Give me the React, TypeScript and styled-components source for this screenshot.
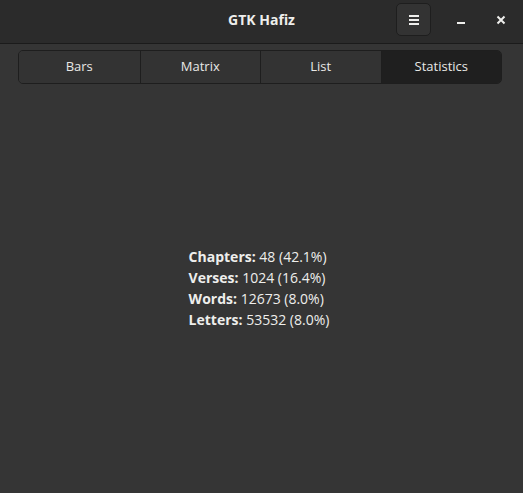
import { createGlobalStyle } from "styled-components";
import styled from "styled-components";

const GlobalStyle = createGlobalStyle`
  html, body {
    margin: 0;
    padding: 0;
    background: #353535;
  }
  body {
    font-family: "Open Sans", "Noto Sans", sans-serif;
    color: #eeeeec;
  }
  * {
    box-sizing: border-box;
  }
`;

const Window = styled.div`
  width: 523px;
  height: 493px;
  display: flex;
  flex-direction: column;
  background: #353535;
  overflow: hidden;
`;

const HeaderBar = styled.header`
  height: 44px;
  flex-shrink: 0;
  display: grid;
  grid-template-columns: 1fr auto 1fr;
  align-items: center;
  background: #2b2b2b;
  border-bottom: 1px solid #1b1b1b;
`;

const Title = styled.div`
  grid-column: 2;
  font-size: 14px;
  font-stretch: 89%;
  font-weight: 700;
  color: #eeeeec;
  margin-bottom: 4px;
`;

const Controls = styled.div`
  grid-column: 3;
  justify-self: end;
  display: flex;
  align-items: center;
  padding-right: 2px;
  margin-bottom: 4px;
`;

const MenuButton = styled.button`
  width: 35px;
  height: 33px;
  margin-right: 10px;
  display: flex;
  align-items: center;
  justify-content: center;
  background: #333333;
  border: 1px solid #1e1e1e;
  border-radius: 5px;
  padding: 0;
  color: #eeeeec;
`;

const WindowButton = styled.button`
  width: 40px;
  height: 33px;
  display: flex;
  align-items: center;
  justify-content: center;
  background: transparent;
  border: none;
  padding: 0;
  color: #eeeeec;
`;

const Content = styled.main`
  flex: 1;
  display: flex;
  flex-direction: column;
  padding: 6px 21px 0 18px;
`;

const TabBar = styled.div`
  display: grid;
  grid-template-columns: repeat(4, 1fr);
  height: 34px;
  border: 1px solid #1e1e1e;
  border-radius: 5px;
  overflow: hidden;
  background: #333333;
`;

const Tab = styled.div<{ $active?: boolean }>`
  display: flex;
  align-items: center;
  justify-content: center;
  font-size: 13px;
  font-stretch: 89%;
  color: #e8e8e6;
  padding-bottom: 2px;
  background: ${(p) => (p.$active ? "#1f1f1f" : "#333333")};
  & + & {
    border-left: 1px solid #1e1e1e;
  }
`;

const StatsArea = styled.div`
  flex: 1;
  display: flex;
  align-items: center;
  justify-content: center;
  padding-bottom: 2px;
`;

const StatList = styled.div`
  display: flex;
  flex-direction: column;
  font-size: 14px;
  line-height: 21px;
  margin-left: -2px;
`;

const Label = styled.b`
  font-weight: 700;
`;

const stats = [
  { label: "Chapters", value: "48 (42.1%)" },
  { label: "Verses", value: "1024 (16.4%)" },
  { label: "Words", value: "12673 (8.0%)" },
  { label: "Letters", value: "53532 (8.0%)" },
];

const tabs = ["Bars", "Matrix", "List", "Statistics"];

export default function App() {
  return (
    <Window>
      <GlobalStyle />
      <HeaderBar>
        <Title>GTK Hafiz</Title>
        <Controls>
          <MenuButton>
            <svg width="12" height="12" viewBox="0 0 12 12">
              <rect x="1" y="1" width="10" height="2" fill="currentColor" />
              <rect x="1" y="5" width="10" height="2" fill="currentColor" />
              <rect x="1" y="9" width="10" height="2" fill="currentColor" />
            </svg>
          </MenuButton>
          <WindowButton>
            <svg width="10" height="10" viewBox="0 0 10 10">
              <rect x="1" y="7" width="8" height="2" fill="currentColor" />
            </svg>
          </WindowButton>
          <WindowButton>
            <svg width="10" height="10" viewBox="0 0 10 10">
              <path d="M1.5 1.5 L8.5 8.5 M8.5 1.5 L1.5 8.5" stroke="currentColor" strokeWidth="2" />
            </svg>
          </WindowButton>
        </Controls>
      </HeaderBar>
      <Content>
        <TabBar>
          {tabs.map((t) => (
            <Tab key={t} $active={t === "Statistics"}>
              {t}
            </Tab>
          ))}
        </TabBar>
        <StatsArea>
          <StatList>
            {stats.map((s) => (
              <div key={s.label}>
                <Label>{s.label}:</Label> {s.value}
              </div>
            ))}
          </StatList>
        </StatsArea>
      </Content>
    </Window>
  );
}
